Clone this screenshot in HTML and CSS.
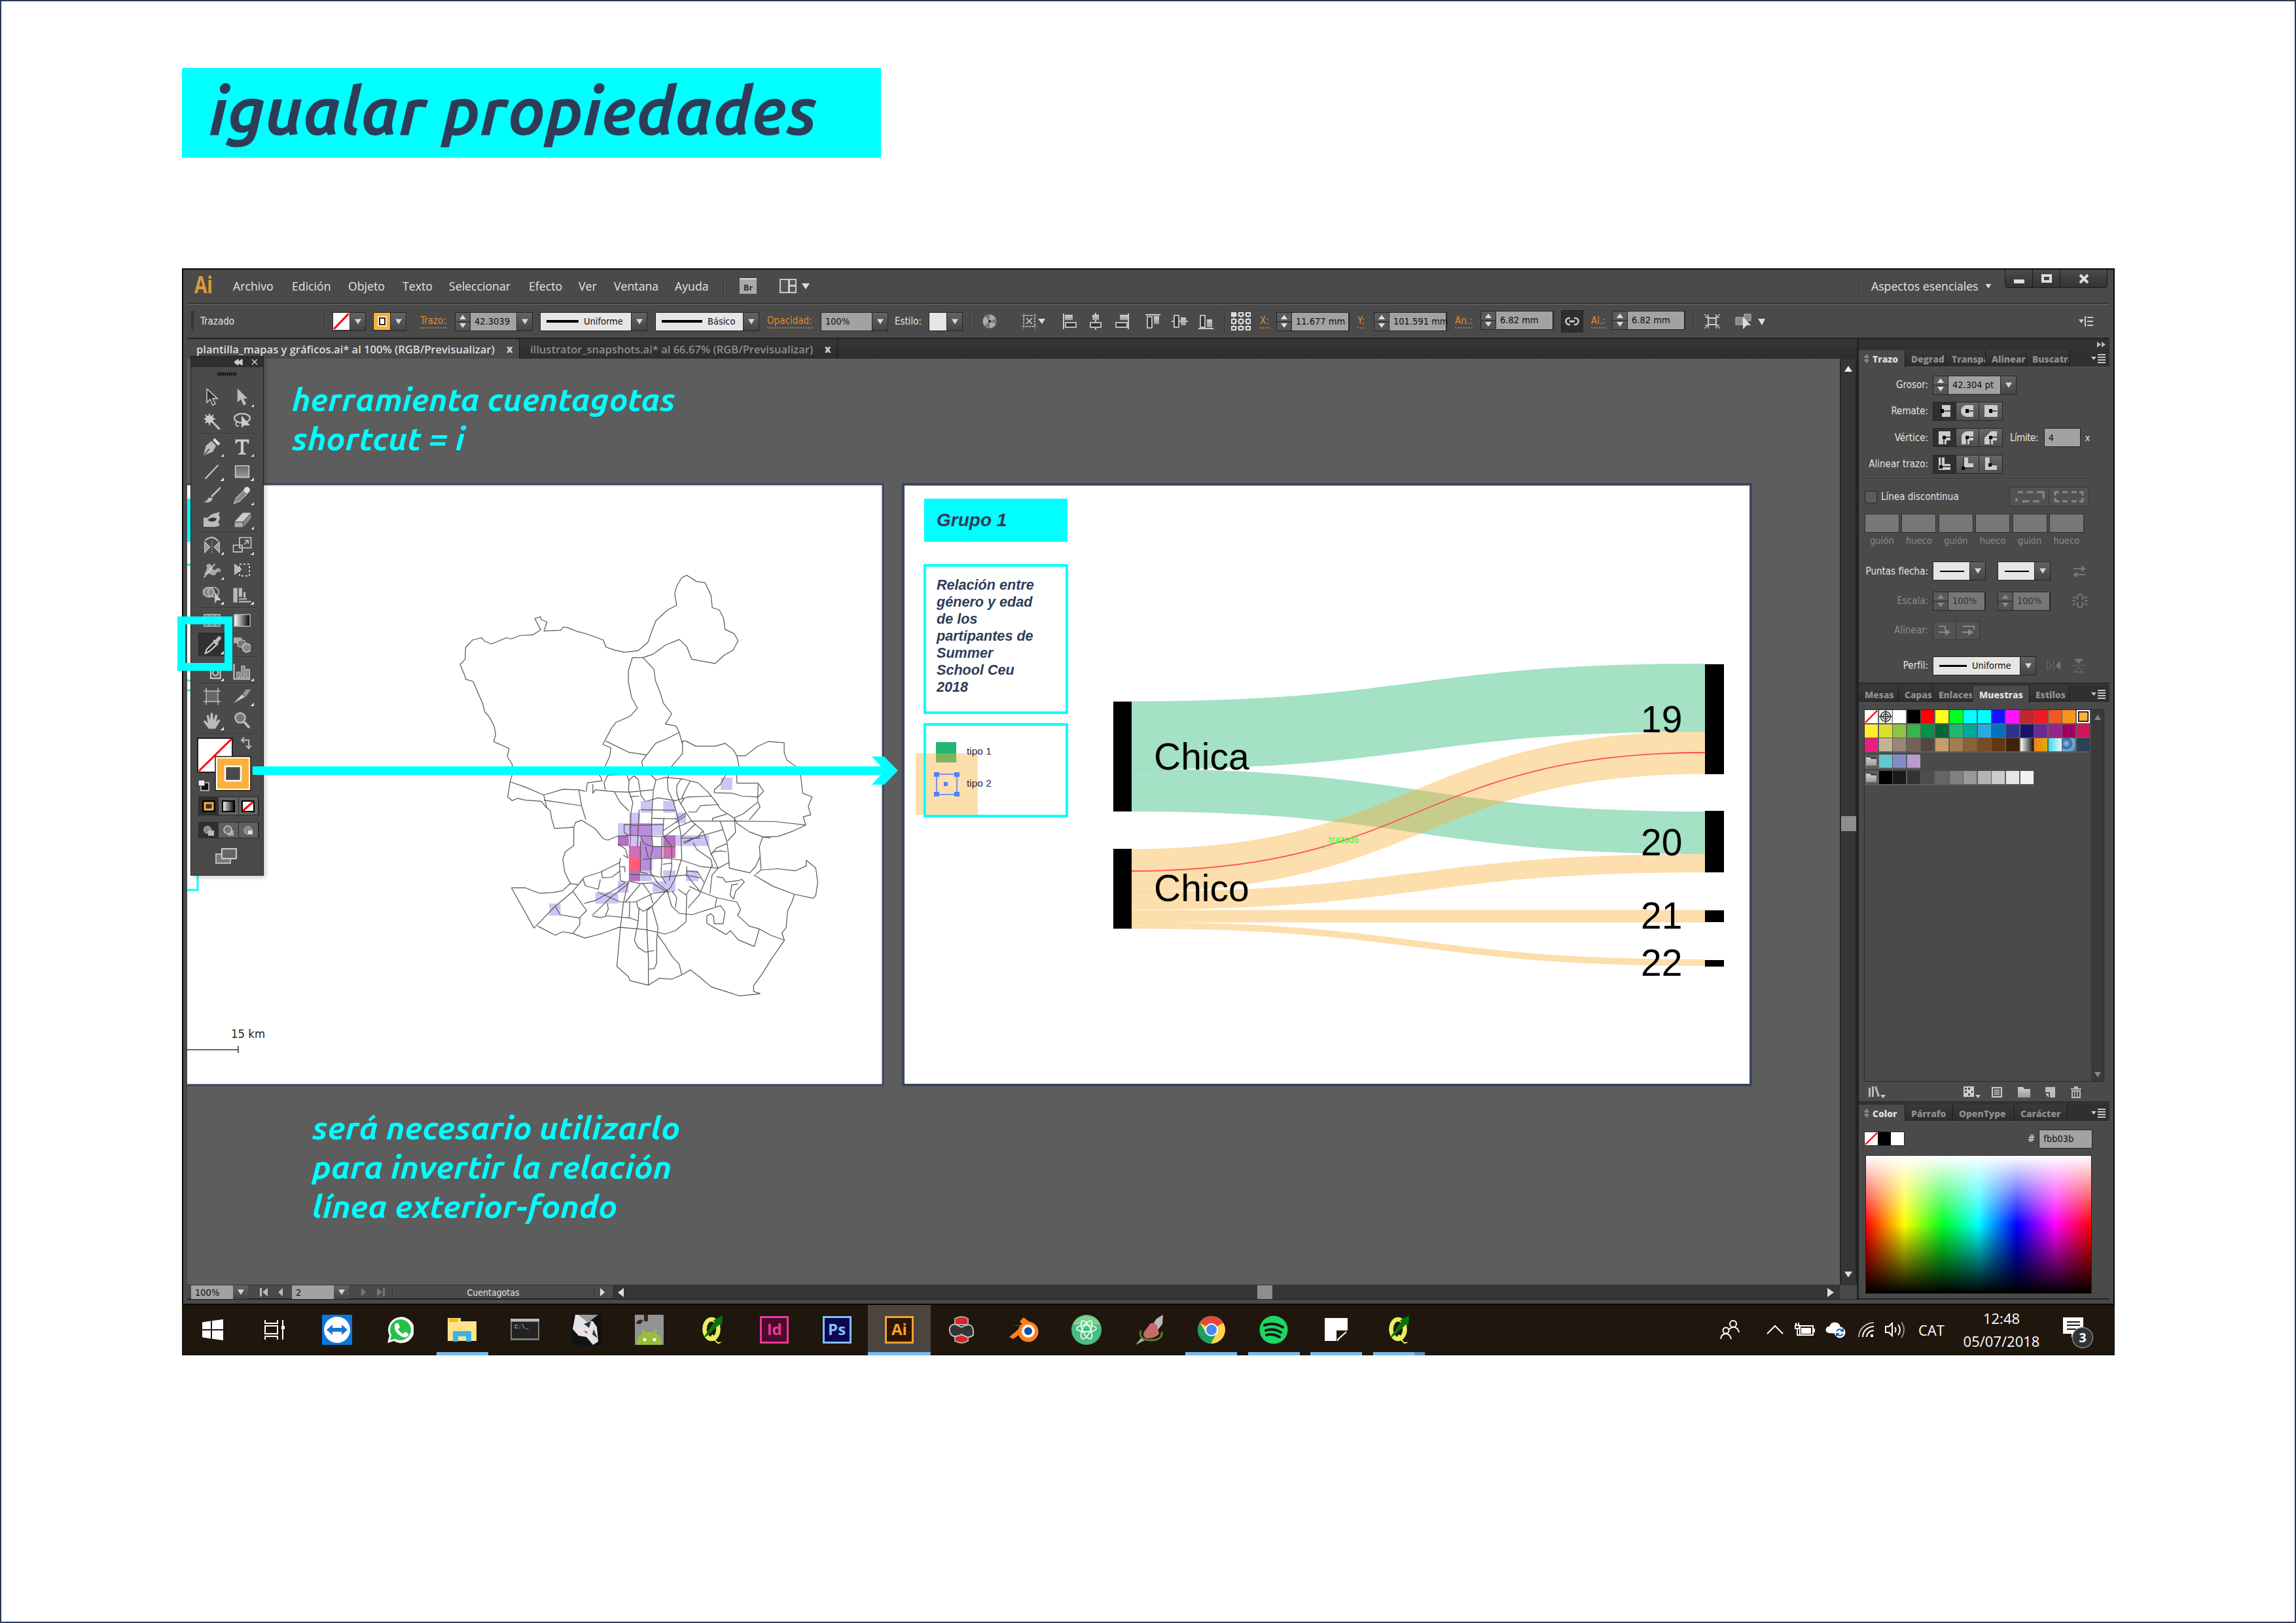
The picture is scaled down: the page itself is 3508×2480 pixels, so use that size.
FILE: index.html
```html
<!DOCTYPE html>
<html lang="es">
<head>
<meta charset="utf-8">
<title>igualar propiedades</title>
<link rel="stylesheet" href="styles.css">
</head>
<body>
<svg width="0" height="0" class="defs">
  <defs>
    <linearGradient id="bw"><stop offset="0" stop-color="#fff"/><stop offset="1" stop-color="#000"/></linearGradient>
    <linearGradient id="gr" x2="0" y2="1"><stop offset="0" stop-color="#d0d0d0"/><stop offset="1" stop-color="#9a9a9a"/></linearGradient>
    <linearGradient id="bx" x2="0" y2="1"><stop offset="0" stop-color="#666"/><stop offset="1" stop-color="#999"/></linearGradient>
    <symbol id="menu-i" viewBox="0 0 22 14"><path d="M0 4h8L4 9zM10 0h12v2H10zM10 4h12v2H10zM10 8h12v2H10zM10 12h12v2H10z" fill="#c8c8c8"/></symbol>
    <symbol id="none" viewBox="0 0 20 20" preserveAspectRatio="none"><path d="M0 0h20v20H0z" fill="#fff"/><path d="M1 19 19 1" stroke="#f00" stroke-width="2.4"/></symbol>
    <symbol id="folder" viewBox="0 0 20 20"><path d="M2 4h6l2 3h8v10H2z" fill="url(#gr)"/><path d="M2 3h6l2 2h8" stroke="#222" fill="none"/></symbol>
    <symbol id="qgis" viewBox="0 0 36 46"><ellipse cx="17" cy="22" rx="10.500" ry="15" fill="none" stroke="#e8f060" stroke-width="6.500"/><path d="M18 30q5 2 6 8t9 3q-5 6-9 1t-8-9z" fill="#e8f060"/><path d="M4 36 22 10l-3-1L34 1l-1 16-4-2L17 26q-5 6-13 10z" fill="#087508"/></symbol>
    <symbol id="tri" viewBox="0 0 10 8"><path d="M0 0h10L5 8z" fill="#d8d8d8"/></symbol>
  </defs>
</svg>

<main class="page">
  <h1 class="title"><svg width="1068" height="137"><text x="41" y="102" textLength="930" lengthAdjust="spacingAndGlyphs">igualar propiedades</text></svg></h1>

  <section class="screen">
    <div class="app">
      <nav class="menubar">
        <span class="ai">Ai</span><span>Archivo</span><span>Edición</span><span>Objeto</span><span>Texto</span><span>Seleccionar</span><span>Efecto</span><span>Ver</span><span>Ventana</span><span>Ayuda</span>
        <i class="sep"></i>
        <span class="br">Br</span>
        <svg width="48" height="24"><path d="M1 1h26v22H1z" fill="#ccc"/><path d="M3 3h11v18H3zM17 3h8v7h-8zM17 13h8v8h-8z" fill="#555"/><path d="M35 8h12l-6 9z" fill="#ddd"/></svg>
        <i class="sep"></i>
        <span>Aspectos esenciales</span>
        <svg class="tri" width="10" height="7"><use href="#tri"/></svg>
        <div class="winbtns">
          <b><svg width="16" height="16"><path d="M0 9h16v6H0z" fill="#ddd"/></svg></b>
          <b><svg width="18" height="14"><path d="M3 2h12v9H3z" fill="none" stroke="#ddd" stroke-width="4"/></svg></b>
          <b><svg width="18" height="16"><path d="m3 2 12 12M15 2 3 14" stroke="#ddd" stroke-width="4"/></svg></b>
        </div>
      </nav>

      <div class="control">
        <i class="grip"></i>
        <span>Trazado</span>
        <i class="sep"></i>
        <div class="combo"><svg width="26" height="26"><use href="#none"/></svg><b class="dd"><svg><use href="#tri"/></svg></b></div>
        <div class="combo"><svg width="26" height="26"><path d="M0 0h26v26H0z" fill="#fbb03b"/><path d="M8.500 7.500h9v11h-9z" fill="#fff" stroke="#fff" stroke-width="4"/><path d="M9 8h8v10H9z" fill="#fff" stroke="#222" stroke-width="2"/></svg><b class="dd"><svg><use href="#tri"/></svg></b></div>
        <span class="link">Trazo:</span>
        <div class="combo"><b class="spin"></b><span class="val w71">42.3039</span><b class="dd"><svg><use href="#tri"/></svg></b></div>
        <div class="combo"><span class="val light w139"><i class="stroke"></i>Uniforme</span><b class="dd"><svg><use href="#tri"/></svg></b></div>
        <div class="combo"><span class="val light w134"><i class="stroke long"></i>Básico</span><b class="dd"><svg><use href="#tri"/></svg></b></div>
        <span class="link">Opacidad:</span>
        <div class="combo"><span class="val w78">100%</span><b class="dd"><svg><use href="#tri"/></svg></b></div>
        <span>Estilo:</span>
        <div class="combo"><span class="val light w26"></span><b class="dd"><svg><use href="#tri"/></svg></b></div>
        <i class="sep"></i>
        <svg width="22" height="24"><circle cx="11" cy="12" r="10.500" fill="#aaa"/><path d="M11 12 4 4l7-3zM11 12l10-4v8zM11 12l-8 7 8 4z" fill="#777"/><circle cx="11" cy="12" r="2" fill="#222"/></svg>
        <i class="sep"></i>
        <svg width="38" height="26"><path d="M4 4h17v17H4z" fill="none" stroke="#ccc" stroke-width="2" stroke-dasharray="3 2"/><path d="M0 4h25M0 21h25M4 0v26M21 0v26" stroke="#888"/><path d="m8 8 9 9m0-9-9 9" stroke="#ccc" stroke-width="1.500"/><path d="M26 9h11l-5 8z" fill="#ddd"/></svg>
        <svg width="22" height="26"><path d="M1 1v24" stroke="#ccc" stroke-width="2"/><path d="M3 3h12v8H3z" fill="url(#gr)"/><path d="M4 15h16v7H4z" fill="#333" stroke="#bbb" stroke-width="2"/></svg>
        <svg width="18" height="26"><path d="M9 0v26" stroke="#ccc" stroke-width="2"/><path d="M4 3h10v8H4z" fill="url(#gr)"/><path d="M1 15h16v7H1z" fill="#333" stroke="#bbb" stroke-width="2"/></svg>
        <svg width="22" height="26"><path d="M20 1v24" stroke="#ccc" stroke-width="2"/><path d="M7 3h12v8H7z" fill="url(#gr)"/><path d="M1 15h17v7H1z" fill="#333" stroke="#bbb" stroke-width="2"/></svg>
        <svg width="23" height="26"><path d="M0 3h23" stroke="#ccc" stroke-width="2"/><path d="M13 5h8v12h-8z" fill="url(#gr)"/><path d="M3 6h7v17H3z" fill="#333" stroke="#bbb" stroke-width="2"/></svg>
        <svg width="25" height="26"><path d="M0 13h25" stroke="#ccc" stroke-width="2"/><path d="M14 7h8v12h-8z" fill="url(#gr)"/><path d="M4 4h7v18H4z" fill="#333" stroke="#bbb" stroke-width="2"/></svg>
        <svg width="23" height="26"><path d="M0 24h23" stroke="#ccc" stroke-width="2"/><path d="M13 10h8v12h-8z" fill="url(#gr)"/><path d="M3 4h7v18H3z" fill="#333" stroke="#bbb" stroke-width="2"/></svg>
        <i class="sep"></i>
        <svg width="32" height="30"><path d="M5 5h22v20H5zM16 5v20M5 15h22" fill="none" stroke="#aaa" stroke-width="1.500"/><g fill="#4a4a4a" stroke="#ddd" stroke-width="2"><path d="M2 2h6v5H2z" fill="#ddd"/><path d="M13 2h6v5h-6zM24 2h6v5h-6zM2 12h6v6H2zM13 12h6v6h-6zM24 12h6v6h-6zM2 23h6v5H2zM13 23h6v5h-6zM24 23h6v5h-6z"/></g></svg>
        <span class="link">X:</span>
        <div class="combo"><b class="spin"></b><span class="val w87">11.677 mm</span></div>
        <span class="link">Y:</span>
        <div class="combo"><b class="spin"></b><span class="val w87">101.591 mm</span></div>
        <span class="link">An.:</span>
        <div class="combo up"><b class="spin"></b><span class="val w87">6.82 mm</span></div>
        <div class="chain"><svg width="22" height="14"><rect x="1.500" y="2" width="19" height="10" rx="5" fill="none" stroke="#ccc" stroke-width="2.500"/><path d="M8 0h6v14H8z" fill="#2e2e2e"/><path d="M7 7h8" stroke="#ccc" stroke-width="3"/></svg></div>
        <span class="link">Al.:</span>
        <div class="combo up"><b class="spin"></b><span class="val w87">6.82 mm</span></div>
        <i class="sep"></i>
        <svg width="24" height="24"><path d="m0 1 7 6m10 0 7-6M0 23l7-6m10 0 7 6M1 6h5V1m12 0v5h5M1 18h5v5m12 0v-5h5" fill="none" stroke="#bbb" stroke-width="1.500"/><path d="M6 7h12v10H6z" fill="#555" stroke="#ccc" stroke-width="2"/></svg>
        <svg width="48" height="24"><path d="M1 6h11v11H1z" fill="#888" stroke="#bbb"/><path d="M14 1h10v10H14z" fill="#888" stroke="#bbb"/><path d="m12 5 12 13h-6l-6 6z" fill="#ddd"/><path d="M35 8h11l-5 10z" fill="#ddd"/></svg>
        <svg width="23" height="16"><path d="M0 5h8L4 11z" fill="#ccc"/><path d="M10 0v16M13 2h9M13 8h9M13 14h9" stroke="#ccc" stroke-width="2"/></svg>
      </div>

      <div class="body">
        <div class="left">
          <div class="doctabs">
            <div class="on"><span>plantilla_mapas y gráficos.ai* al 100% (RGB/Previsualizar)</span><b>x</b></div>
            <div><span>illustrator_snapshots.ai* al 66.67% (RGB/Previsualizar)</span><b>x</b></div>
          </div>
          <div class="mid">
            <svg class="canvas" width="2525" height="1415" viewBox="286 548 2525 1415">
              <!-- map artboard -->
              <path d="M270 740H1349V1658H270z" fill="#fff" stroke="#3c4560" stroke-width="3"/>
              <path d="M286 762h10v66h-10z" fill="#0ff"/>
              <path d="M286 863h10M286 1040h10M286 1055h10M286 1360h16v-40" fill="none" stroke="#0ff" stroke-width="3"/>
              <path d="M286 1604h78M364 1598v11" stroke="#666" stroke-width="2"/>
              <text x="353" y="1586" class="km" textLength="52" lengthAdjust="spacingAndGlyphs">15 km</text>
              <svg x="680" y="860" width="600" height="680" viewBox="0 0 1568 1568" preserveAspectRatio="none">
                <g fill="#cfc3f6">
                  <path d="M1101 757h46v43h-46zM781 839h46v41h-46zM871 839h47v41h-47zM735 880h44v38h-44zM921 880h41v38h-41zM690 918h44v42h-44zM827 918h43v42h-43zM738 960h40v38h-40zM918 960h136v38H918zM690 1122h43v40h-43zM600 1161h91v40h-91zM416 1200h45v43h-45zM780 1084h46v38h-46zM871 1084h49v77h-91v-39h42zM962 1084h49v38h-49z"/>
                </g>
                <path d="M734 918h92v42h-92zM780 960h47v38h40v42h-40v44h-47z" fill="#bc8bdb"/>
                <path d="M690 960h44v38h-44zM871 960h49v38h-49zM734 1084h45v38h-45z" fill="#b56fc2"/>
                <path d="M734 998h45v42h-45zM871 998h49v42h-49z" fill="#cf6fb4"/>
                <path d="M734 1040h46v44h-46z" fill="#ff5c7c"/>
                <g class="map">
                  <path d="M770 310 716 315 680 308 642 297 632 272 570 252 528 242 488 228 472 226 462 238 395 240 407 208 384 200 382 190 358 196 382 236 350 254 300 256 265 268 245 264 185 286 158 276 145 264 110 272 82 298 80 340 60 358 80 400 82 410 112 418 135 465 150 495 158 524 178 545 196 576 202 605 194 630 256 654 248 682 268 710 270 740 260 770 255 800 250 825 268 838 290 830 320 836 384 840 404 862 420 872 425 900 437 936 514 932 514 996 480 1018 470 1045 478 1090 500 1130"/>
                  <path d="M770 310 810 280 826 240 842 204 888 166 925 150 917 110 925 82 945 52 965 44 1005 66 1038 70 1062 115 1067 158 1095 166 1112 195 1118 235 1155 250 1170 275 1150 308 1115 325 1078 355 985 340 965 295 935 270 880 290 830 322 790 334 748 334 732 380 732 420 745 475 768 512 740 540 683 562 665 582 630 640 662 652 658 680 640 716 615 745 628 768 568 775 564 806"/>
                  <path d="M790 334 834 375 840 415 858 455 872 495 905 532 880 568 922 575 935 598 948 640 948 628 962 628 1000 646 1080 646 1118 636 1150 658 1165 680 1174 720 1165 745 1165 776 1250 776 1272 805 1250 825 1185 822 1147 812 1075 810 1075 800 1100 780 1122 745"/>
                  <path d="M1165 680 1200 680 1245 648 1290 630 1354 634 1354 668 1365 695 1402 718 1420 750 1428 812 1466 825 1450 858 1460 888 1430 895 1440 924 1390 945 1330 964 1270 966 1215 948 1165 918 1155 900"/>
                  <path d="M948 640 948 672 900 722 888 765 890 800 912 842 930 900 942 960 945 1040 925 1100 900 1145 878 1160 826 1210M935 598 880 622 842 635 805 677 735 668 642 628M805 677 785 700 790 720 842 765 832 800 828 850 825 900 825 960 830 1000 820 1040 820 1090 850 1130 895 1162"/>
                  <path d="M260 772 320 790 394 818 470 798 536 800 560 806M394 818 406 862M394 836 545 856M534 800 545 856 562 905M514 932 520 915 545 907 598 936 632 972 650 977 690 962M590 780 590 812 600 800 675 806 735 808 830 800M675 806 700 845 734 874"/>
                  <path d="M650 748 635 775 640 800M650 748 725 746 735 770 732 800 750 845 742 880M735 765 755 750 772 765 778 800M780 802 782 820 800 840M842 765 880 756 950 762 1010 775 1050 808 1075 835 1100 868 1155 900 1160 950 1128 980M942 762 925 785 925 810 935 840 962 880 985 910 1030 945 1060 1020 1090 1076M978 770 960 800 945 830"/>
                  <path d="M805 840 850 828 920 838 970 825 1065 822M780 870 920 872M940 850 955 830M970 878 1002 878 1020 855 1092 852M1068 910 1068 900 1125 885M985 910 1155 910 1320 912 1440 924M1155 898 1190 885 1250 842 1258 860 1215 906M1250 780 1248 840"/>
                  <path d="M742 880 740 960 738 1000M775 870 770 960 768 1000M715 922 770 925 870 922M715 922 715 950 735 962M690 965 735 960 870 965M866 963 866 1035M873 902 870 960 905 1000 905 1070 895 1120M825 900 925 902 962 882M870 944 915 918 962 890M875 965 930 930 985 910M780 965 795 990 830 1000 920 1000M690 990 720 1008 730 1040 712 1030"/>
                  <path d="M945 965 1000 920M950 985 1010 965 1030 945M955 990 1000 968 1110 940M942 970 1020 970M1098 910 1110 940 1125 980 1132 1030 1135 1076 1217 1092 1240 1070 1258 1035 1255 1000 1268 966M990 985 1005 1010 1062 1045 1068 1070M1060 1030 1085 1004 1125 990M1066 1020 1100 1015 1125 1018M1268 966 1300 970M1258 1035 1262 1080"/>
                  <path d="M1232 1100 1310 1140 1395 1168 1470 1182 1480 1172 1488 1125 1480 1075 1442 1048 1442 1068 1400 1085 1330 1078 1262 1082 1240 1098"/>
                  <path d="M1395 1168 1385 1195 1368 1225 1362 1285 1345 1305 1355 1330 1300 1400 1265 1450 1232 1490 1232 1510 1258 1518 1175 1526 1120 1510 1062 1494 1020 1462 980 1434 945 1452 905 1467 855 1464 812 1488 738 1472 732 1458 686 1422 700 1285 712 1200 732 1120"/>
                  <path d="M1355 1330 1300 1312 1255 1290 1215 1280 1168 1242 1180 1222 1165 1195 1085 1180 1018 1158 975 1140M1045 1270 1122 1310 1140 1296 1170 1328 1235 1352 1255 1290M1045 1270 1045 1245 1060 1236 1072 1245 1075 1272 1110 1272 1118 1230 1100 1208 1078 1214 1085 1180M848 1310 880 1350 905 1385 935 1415 945 1452"/>
                  <path d="M265 1145 320 1145 375 1164 430 1162 470 1155 500 1130 532 1134 555 1108 620 1090 700 1055M265 1145 355 1287 440 1210 510 1158 550 1115M370 1280 440 1312 470 1300 510 1306 558 1322 620 1308 695 1284 800 1292 880 1308 920 1296 962 1265 965 1170M510 1306 538 1275 538 1250 565 1225 510 1158"/>
                  <path d="M440 1210 460 1240 538 1252M556 1200 600 1190 680 1150 722 1125M588 1242 620 1215 660 1180 735 1128M590 1245 620 1250 650 1244 740 1252 772 1262M610 1160 700 1195 760 1195 830 1165 885 1158M625 1085 628 1110 665 1108 700 1085M550 1112 560 1138 612 1150 620 1115M640 1244 652 1220 648 1200M738 1196 735 1250M765 1195 770 1215 792 1228 826 1210"/>
                  <path d="M700 1040 696 1062 700 1120 720 1125M700 1070 718 1072 718 1090M735 1098 820 1100 860 1108 960 1100 1020 1110M735 1122 780 1130 826 1128 885 1160M790 1130 818 1165 830 1200M720 1195 780 1132M790 1045 880 1040 945 1048 1020 1070 1090 1076 1135 1055M826 1210 806 1225 806 1290 812 1400 812 1488M826 1210 850 1285 845 1330 845 1410 835 1430 812 1432M775 1215 770 1270 756 1330 770 1355 800 1372 835 1366"/>
                  <path d="M885 1150 905 1210 935 1235 985 1240 1075 1215M905 1155 925 1180 920 1215M930 1150 962 1170 978 1150M965 1070 965 1100 990 1128 1018 1158M965 1085 1010 1090 1035 1128M1090 1076 1066 1100 1058 1165M1066 1065 1015 1170 970 1216M1085 1106 1110 1110 1120 1125 1170 1120 1185 1115 1195 1125 1160 1158 1152 1185 1138 1170 1145 1135 1170 1132M866 1035 862 1100 882 1130M870 1062 905 1058M738 824 775 822M800 1000 812 1040M780 980 780 1090 808 1095"/>
                </g>
              </svg>

              <!-- diagram artboard -->
              <path d="M1380 740H2675V1658H1380z" fill="#fff" stroke="#3c4560" stroke-width="4"/>
              <path d="M1412 762h219v66h-219z" fill="#0ff"/>
              <text x="1431" y="804" class="leg g">Grupo 1</text>
              <path d="M1413 864h217v225h-217z" fill="none" stroke="#0ff" stroke-width="4"/>
              <g class="leg">
                <text x="1431" y="901">Relación entre</text><text x="1431" y="927">género y edad</text><text x="1431" y="953">de los</text><text x="1431" y="979">partipantes de</text><text x="1431" y="1005">Summer</text><text x="1431" y="1031">School Ceu</text><text x="1431" y="1057">2018</text>
              </g>
              <path d="M1430 1134h31v31h-31z" fill="#22b573"/>
              <path d="M1399 1151h95v94h-95z" fill="#fbb03b" opacity=".42"/>
              <path d="M1413 1107h217v140h-217z" fill="none" stroke="#0ff" stroke-width="4"/>
              <path d="M1431 1183h31v31h-31z" fill="none" stroke="#4f80ff" stroke-width="1.500"/>
              <path d="M1427 1180h8v7h-8zM1458 1180h8v7h-8zM1427 1210h8v7h-8zM1458 1210h8v7h-8zM1442 1195h6v6h-6z" fill="#4f80ff"/>
              <text x="1477" y="1153" class="tipo">tipo 1</text><text x="1477" y="1202" class="tipo">tipo 2</text>
              <g fill="none" stroke="#22b573">
                <path d="M1729 1123.500C2167 1123.500 2167 1066 2605 1066" stroke-width="104" opacity=".41"/>
                <path d="M1729 1207.500C2167 1207.500 2167 1272.500 2605 1272.500" stroke-width="65" opacity=".41"/>
              </g>
              <g fill="none" stroke="#fbb03b">
                <path d="M1729 1330C2167 1330 2167 1150 2605 1150" stroke-width="65" opacity=".42"/>
                <path d="M1729 1376C2167 1376 2167 1319 2605 1319" stroke-width="28" opacity=".42"/>
                <path d="M1729 1400H2605" stroke-width="19" opacity=".42"/>
                <path d="M1729 1414C2167 1414 2167 1471 2605 1471" stroke-width="10" opacity=".42"/>
              </g>
              <path d="M1729 1331C2167 1331 2167 1150 2605 1150" stroke="#ff4f4f" stroke-width="1.800" fill="none"/>
              <path d="M1701 1072h28v168h-28zM1701 1297h28v122h-28zM2605 1015h29v168h-29zM2605 1239h29v94h-29zM2605 1391h29v18h-29zM2605 1467h29v10h-29z"/>
              <g class="sk"><text x="1763" y="1176">Chica</text><text x="1763" y="1377">Chico</text><text x="2507" y="1119">19</text><text x="2507" y="1307">20</text><text x="2507" y="1419">21</text><text x="2507" y="1491">22</text></g>
              <text x="2030" y="1288" class="hint">trazado</text><path d="m2020 1291 7 7m0-7-7 7" stroke="#3f5"/>
            </svg>
            <div class="vscroll"><svg width="12" height="9"><path d="M0 9h12L6 0z" fill="#eee"/></svg><i></i><svg width="12" height="9"><path d="M0 0h12L6 9z" fill="#ddd"/></svg></div>
          </div>
          <div class="status">
            <span class="val">100%</span><b class="dd"><svg><use href="#tri"/></svg></b>
            <svg width="14" height="13"><path d="M1 0h3v13H1zM13 0v13L5 6.500z" fill="#bbb"/></svg>
            <svg width="14" height="13"><path d="M9 0v13L2 6.500z" fill="#bbb"/></svg>
            <span class="val">2</span><b class="dd"><svg><use href="#tri"/></svg></b>
            <svg width="14" height="13"><path d="M2 0v13l7-6.500z" fill="#777"/></svg>
            <svg width="14" height="13"><path d="M10 0h3v13h-3zM1 0v13l8-6.500z" fill="#777"/></svg>
            <span class="tool">Cuentagotas</span>
            <svg width="12" height="13"><path d="M4 0v13l7-6.500z" fill="#ddd"/></svg>
            <div class="hscroll"><svg width="10" height="14"><path d="M9 0v14L0 7z" fill="#ddd"/></svg><i></i><svg width="10" height="14"><path d="M0 0v14l10-7z" fill="#ddd"/></svg></div>
          </div>
        </div>

        <aside class="dock">
          <div class="dockhead"><svg width="14" height="9"><path d="M1 0v9l6-4.500zM8 0v9l6-4.500z" fill="#bbb"/></svg></div>
          <div class="ptabs t1"><b class="on"><svg width="8" height="14"><path d="M1 5 4 1l3 4zM1 9l3 4 3-4z" fill="none" stroke="#ccc"/></svg>Trazo</b><b>Degrad</b><b>Transpa</b><b>Alinear</b><b>Buscatra</b><em><svg width="22" height="14"><use href="#menu-i"/></svg></em></div>
          <div class="stroke-panel">
            <div class="row r40"><label>Grosor:</label><div class="combo"><b class="spin"></b><span class="val w80">42.304 pt</span><b class="dd"><svg><use href="#tri"/></svg></b></div></div>
            <div class="row r40"><label>Remate:</label>
              <div class="btns"><b class="on"><svg width="20" height="18"><path d="M6 0h13v18H6z" fill="#ccc"/><path d="M5 9h14M4 4v3" stroke="#222" stroke-width="1.500" fill="none"/><path d="M4 6h5v6H4z"/></svg></b><b><svg width="20" height="18"><path d="M19 0v18H9a9 9 0 0 1 0-18z" fill="#ccc"/><path d="M9 9h10" stroke="#222" stroke-width="1.500"/><path d="M7 6h5v6H7z"/></svg></b><b><svg width="20" height="18"><path d="M0 0h20v18H0z" fill="#ccc"/><path d="M9 9h10" stroke="#222" stroke-width="1.500"/><path d="M7 6h5v6H7z"/></svg></b></div></div>
            <div class="row r40"><label>Vértice:</label>
              <div class="btns"><b class="on"><svg width="20" height="20"><path d="M1 0h18v14h-6v6H1z" fill="#ccc"/><path d="M19 9H9v11" stroke="#222" stroke-width="1.500" fill="none"/><path d="M7 7h5v5H7z"/></svg></b><b><svg width="20" height="20"><path d="M19 0v14h-6v6H1V9a9 9 0 0 1 9-9z" fill="#ccc"/><path d="M19 9H9v11" stroke="#222" stroke-width="1.500" fill="none"/><path d="M7 7h5v5H7z"/></svg></b><b><svg width="20" height="20"><path d="M19 0v14h-6v6H0V10L10 0z" fill="#ccc"/><path d="M19 9H9v11" stroke="#222" stroke-width="1.500" fill="none"/><path d="M7 7h5v5H7z"/></svg></b></div>
              <span class="lim">Límite:</span><span class="val box">4</span><span class="x">x</span></div>
            <div class="row r40"><label>Alinear trazo:</label>
              <div class="btns"><b class="on"><svg width="20" height="20"><path d="M1 0h9v10h9v9H1z" fill="#ccc"/><path d="M5 0v14h14" stroke="#222" stroke-width="1.500" fill="none"/><path d="M2 12h5v5H2z"/></svg></b><b><svg width="20" height="20"><path d="M4 0h7v9h8v7H4z" fill="#ccc"/><path d="M4 0v16h15" stroke="#222" stroke-width="1.500" fill="none"/><path d="M1 14h5v5H1z"/></svg></b><b><svg width="20" height="20"><path d="M1 0h9v10h9v9H1z" fill="#ccc"/><path d="M9 0v11h10" stroke="#222" stroke-width="1.500" fill="none"/><path d="M6 9h5v5H6z"/></svg></b></div></div>
            <hr>
            <div class="row dash"><i class="check"></i><span>Línea discontinua</span>
              <div class="btns wide off"><b><svg width="46" height="18"><path d="M3 16v-5M5 2h8m6 0h9m6 0h10v10M12 16h10m6 0h10" stroke="#888" stroke-width="3" fill="none"/></svg></b><b><svg width="46" height="18"><path d="M2 7V2h6m5 0h8m6 0h8m4 0h5v5M2 11v5h6m5 0h8m6 0h8m4 0h5v-5" stroke="#888" stroke-width="3" fill="none"/></svg></b></div></div>
            <div class="dashes"><div><i></i>guión</div><div><i></i>hueco</div><div><i></i>guión</div><div><i></i>hueco</div><div><i></i>guión</div><div><i></i>hueco</div></div>
            <hr>
            <div class="row r51"><label>Puntas flecha:</label>
              <div class="combo"><span class="val light w55"><i class="thin"></i></span><b class="dd"><svg><use href="#tri"/></svg></b></div>
              <div class="combo second"><span class="val light w55"><i class="thin"></i></span><b class="dd"><svg><use href="#tri"/></svg></b></div>
              <svg class="ico" width="22" height="20"><path d="M2 5h12V1l7 5-7 5V7H2zM20 14H8v-3l-7 4 7 5v-4h12z" fill="#777"/></svg></div>
            <div class="row r40s dim"><label>Escala:</label>
              <div class="combo"><b class="spin"></b><span class="val w55">100%</span></div>
              <div class="combo second"><b class="spin"></b><span class="val w55">100%</span></div>
              <svg class="ico" width="24" height="24"><path d="M8 10V6q0-4 4-4t4 4v4M8 14v4q0 4 4 4t4-4v-4M0 12h5m14 0h5M1 6l4 2M1 18l4-2M23 6l-4 2m4 10-4-2" stroke="#777" stroke-width="2" fill="none"/></svg></div>
            <div class="row r50 dim"><label>Alinear:</label>
              <div class="btns off"><b><svg width="20" height="18"><path d="M1 3h10v5M1 12h12" stroke="#888" fill="none" stroke-width="2"/><path d="m11 7 8 5-8 5z" fill="#888"/></svg></b><b><svg width="20" height="18"><path d="M1 3h18v5M1 12h12" stroke="#888" fill="none" stroke-width="2"/><path d="m10 7 8 5-8 5z" fill="#888"/></svg></b></div></div>
            <hr>
            <div class="row r50"><label>Perfil:</label><div class="combo"><span class="val light w132"><i class="stroke pf"></i>Uniforme</span><b class="dd"><svg><use href="#tri"/></svg></b></div>
              <svg class="flip" width="22" height="16"><path d="M1 1v14l7-7z" fill="none" stroke="#777"/><path d="M11 0v16" stroke="#888" stroke-dasharray="2 2"/><path d="M21 1v14l-7-7z" fill="#777"/></svg>
              <svg class="flip2" width="18" height="22"><path d="M2 1h14L9 8z" fill="#777"/><path d="M0 11h18" stroke="#888" stroke-dasharray="2 2"/><path d="M2 21h14l-7-7z" fill="none" stroke="#777"/></svg></div>
          </div>

          <div class="ptabs t2"><b>Mesas</b><b>Capas</b><b>Enlaces</b><b class="on">Muestras</b><b>Estilos</b><em><svg width="22" height="14"><use href="#menu-i"/></svg></em></div>
          <div class="sw-panel">
            <div class="sw-box">
              <div class="sw-list">
                <div class="sw"><svg width="20" height="20"><use href="#none"/></svg><svg width="20" height="20"><path d="M0 0h20v20H0z" fill="#eee"/><circle cx="10" cy="10" r="7.500" fill="none" stroke="#333" stroke-width="1.500"/><circle cx="10" cy="10" r="4" fill="none" stroke="#333" stroke-width="1.500"/><path d="M10 0v20M0 10h20" stroke="#333" stroke-width="1.500"/></svg><i style="background:#fff"></i><i style="background:#000"></i><i style="background:#f00"></i><i style="background:#ffff1d"></i><i style="background:#00ff26"></i><i style="background:#0ff"></i><i style="background:#0ff"></i><i style="background:#1414ff"></i><i style="background:#ff14ff"></i><i style="background:#c1272d"></i><i style="background:#ed1c24"></i><i style="background:#f15a24"></i><i style="background:#f7931e"></i><i class="cur" style="background:#fbb03b"></i></div>
                <div class="sw"><i style="background:#fcee2f"></i><i style="background:#d9e02d"></i><i style="background:#8cc63f"></i><i style="background:#39b54a"></i><i style="background:#009245"></i><i style="background:#006837"></i><i style="background:#22b573"></i><i style="background:#00a99d"></i><i style="background:#29abe2"></i><i style="background:#0071bc"></i><i style="background:#2e3192"></i><i style="background:#1b1464"></i><i style="background:#662d91"></i><i style="background:#93278f"></i><i style="background:#9e005d"></i><i style="background:#d4145a"></i></div>
                <div class="sw"><i style="background:#ed1e79"></i><i style="background:#c7b299"></i><i style="background:#998675"></i><i style="background:#736357"></i><i style="background:#534741"></i><i style="background:#c69c6d"></i><i style="background:#a67c52"></i><i style="background:#8c6239"></i><i style="background:#754c24"></i><i style="background:#603813"></i><i style="background:#42210b"></i><i style="background:linear-gradient(90deg,#fff,#111)"></i><i style="background:linear-gradient(90deg,#ff7a10,#d8b010)"></i><i style="background:linear-gradient(90deg,#3ddcee,#e8f4f4)"></i><i class="pat"></i><i style="background:#2e3f58"></i></div>
                <div class="sw group"><svg width="20" height="20"><use href="#folder"/></svg><i style="background:#63c8cd"></i><i style="background:#838bc5"></i><i style="background:#bb9bcb"></i></div>
                <div class="sw group"><svg width="20" height="20"><use href="#folder"/></svg><i style="background:#000"></i><i style="background:#1a1a1a"></i><i style="background:#333"></i><i style="background:#4d4d4d"></i><i style="background:#666"></i><i style="background:#808080"></i><i style="background:#999"></i><i style="background:#b3b3b3"></i><i style="background:#ccc"></i><i style="background:#e6e6e6"></i><i style="background:#f2f2f2"></i></div>
              </div>
              <div class="sw-scroll"><svg width="10" height="8"><path d="M0 8h10L5 0z" fill="#888"/></svg><svg width="10" height="8"><path d="M0 0h10L5 8z" fill="#888"/></svg></div>
            </div>
            <div class="sw-foot">
              <svg width="28" height="18"><path d="M1 2h3v14H1zM6 0h3v16H6zM10 1l3-1 5 15-3 1z" fill="#bbb"/><path d="M19 13h8l-4 5z" fill="#ccc"/></svg>
              <svg width="27" height="18"><path d="M0 0h16v16H0z" fill="#ccc"/><path d="M2 2h3v3H2zM7 2h3v3H7zM2 7h3v3H2zM7 11h3v3H7zM12 7h2v3h-2z" fill="#444"/><path d="M18 13h8l-4 5z" fill="#ccc"/></svg>
              <svg width="16" height="16"><path d="M0 0h16v16H0z" fill="#ccc"/><path d="M2 2h12v12H2z" fill="#555"/><path d="M4 5h8M4 8h8M4 11h8" stroke="#ccc" stroke-width="1.500"/></svg>
              <svg width="20" height="16"><path d="M0 0h8l2 3h9v13H0z" fill="url(#gr)"/></svg>
              <svg width="16" height="16"><path d="M0 0h15v16H7V8H0z" fill="#bbb"/><path d="M0 10h5v6z" fill="#ccc"/></svg>
              <svg width="18" height="18"><path d="M1 3h16v2H1zM6 0h6v3H6z" fill="#bbb"/><path d="M3 7h12v10H3z" fill="none" stroke="#bbb" stroke-width="2"/><path d="M7 7v10M11 7v10" stroke="#bbb" stroke-width="1.500"/></svg>
            </div>
          </div>

          <div class="ptabs t3"><b class="on"><svg width="8" height="14"><path d="M1 5 4 1l3 4zM1 9l3 4 3-4z" fill="none" stroke="#ccc"/></svg>Color</b><b>Párrafo</b><b>OpenType</b><b>Carácter</b><em><svg width="22" height="14"><use href="#menu-i"/></svg></em></div>
          <div class="color-panel">
            <div class="hex"><div class="mini"><svg width="20" height="20"><use href="#none"/></svg><i class="k"></i><i class="w"></i></div><span>#</span><span class="val">fbb03b</span></div>
            <div class="spectrum"></div>
          </div>
        </aside>
      </div>
    </div>

    <footer class="taskbar">
      <div class="apps">
        <div><svg width="32" height="32"><path d="M0 4.500 13 2.500V15H0zM15 2.200 32 0v15H15zM0 17h13v12.500L0 27.500zM15 17h17v15l-17-2.200z" fill="#fff"/></svg></div>
        <div><svg width="32" height="30"><path d="M1 0v5h19V0M1 30v-5h19v5M1 9h19v12H1zM28 0v30" fill="none" stroke="#fff" stroke-width="2"/><path d="M26 9h5v5h-5z" fill="#fff"/></svg></div>
        <div><svg width="46" height="46"><path d="M0 0h46v46H0z" fill="#0a78dc"/><circle cx="23" cy="23" r="20" fill="#fff"/><path d="m7 23 9-8v5h14v-5l9 8-9 8v-5H16v5z" fill="#1976d2"/></svg></div>
        <div><svg width="42" height="42"><path d="M2 41 5 30A20 20 0 1 1 12 38z" fill="#fff"/><path d="m6 37 2-8a16 16 0 1 1 6 6z" fill="#25c24a"/><path d="M14 12q3-3 5 0l2 5-3 3q3 5 8 7l3-3 5 3q1 3-3 5-5 2-12-4-9-8-5-16z" fill="#fff"/></svg></div>
        <div class="run"><svg width="44" height="36"><path d="M0 0h20v5h24v30H0z" fill="#ffe28c"/><path d="M2 1h14v5H2z" fill="#ffb900"/><path d="M8 36V20h28v16h-8v-8H16v8z" fill="#3bb3ea"/></svg></div>
        <div><svg width="44" height="34"><path d="M0 0h44v33H0z" fill="#777"/><path d="M2 5h40v25H2z" fill="#222"/><path d="M0 0h44v4H0z" fill="#bbb"/><text x="6" y="15" font-size="9" fill="#ccc" font-family="Liberation Mono">C:\_</text></svg></div>
        <div><svg width="46" height="46"><path d="M0 0h46v46H0z" fill="#111"/><path d="M5 0 1 22l9 10 12 2 10 12 8-5-2-22-6-9L20 8 10 0z" fill="#e4e4e4"/><path d="M10 0 24 12 40 0z" fill="#999"/><path d="m18 14 8 6 3-10zM33 22l6 14-8-6z" fill="#333"/><path d="m18 24 6 2-2 3z" fill="#e33"/></svg></div>
        <div><svg width="44" height="46"><path d="M0 0h44v46H0z" fill="#909296"/><path d="M17 0v10M5 14a4 4 0 0 1 6-3" stroke="#3a2418" stroke-width="6"/><path d="M3 46V42a19 16 0 0 1 38 0v4z" fill="#97bf3a"/><path d="m11 22 4 8m18-8-4 8" stroke="#97bf3a" stroke-width="3"/><circle cx="15" cy="38" r="2.500" fill="#fff"/><circle cx="30" cy="38" r="2.500" fill="#fff"/></svg></div>
        <div><svg width="36" height="46"><use href="#qgis"/></svg></div>
        <div><span class="cc id">Id</span></div>
        <div><span class="cc ps">Ps</span></div>
        <div class="active"><span class="cc il">Ai</span></div>
        <div><svg width="40" height="42"><path d="M10 4q10-6 20 0v9H10zM10 38q10 6 20 0v-9H10z" fill="#d22" stroke="#aaa" stroke-width="2"/><path d="M2 18q2-6 10-5l8 4q8-5 14-3 5 3 4 15-4 4-10 3l-8-4q-8 5-14 2-5-4-4-12z" fill="#333" stroke="#bbb" stroke-width="2"/></svg></div>
        <div><svg width="46" height="38"><path d="M4 12h17l-5-6 6-6 18 14z" fill="#ff7f1e"/><path d="m0 30 20-17 6 6L6 33z" fill="#ff7f1e"/><circle cx="29" cy="22" r="15.500" fill="#ff7f1e"/><circle cx="29" cy="21" r="10" fill="#fff"/><circle cx="29" cy="21" r="6" fill="#0a4f9c"/></svg></div>
        <div><svg width="46" height="46"><circle cx="23" cy="23" r="23" fill="#4cbb84"/><path d="M2 15a23 23 0 0 1 42 0z" fill="#a6dd98" opacity=".6"/><g fill="none" stroke="#e8fff0" stroke-width="1.800"><ellipse cx="23" cy="23" rx="6" ry="15" transform="rotate(25 23 23)"/><ellipse cx="23" cy="23" rx="6" ry="15" transform="rotate(-25 23 23)"/><ellipse cx="23" cy="21" rx="15" ry="5"/></g></svg></div>
        <div><svg width="46" height="46"><path d="m26 18 8-12 10-6-1 14-9 12z" fill="#bbb"/><path d="m2 46 8-10 8 2z" fill="#aaa"/><path d="M10 24q-4 14 14 15 20 0 18-13" fill="none" stroke="#5a8020" stroke-width="3"/><path d="m15 26 10-13q8-1 10 4l3 12q-6 8-20 7-6-4-3-10z" fill="#c96a6a"/></svg></div>
        <div class="run"><svg width="44" height="44"><circle cx="22" cy="22" r="21" fill="#fdd34c"/><path d="M22 22 4 11a21 21 0 0 1 36 0z" fill="#dd4b3e"/><path d="M4 11a21 21 0 0 0 17 32l9-17H13z" fill="#1da05d"/><path d="M22 12h19l-1-1-17-3z" fill="#dd4b3e"/><circle cx="22" cy="22" r="10" fill="#fff"/><circle cx="22" cy="22" r="8" fill="#4587f4"/></svg></div>
        <div class="run"><svg width="44" height="44"><circle cx="22" cy="22" r="21.500" fill="#1ed760"/><path d="M8 15q14-5 28 3M10 23q12-4 23 3M11 30q10-3 20 3" fill="none" stroke="#191a14" stroke-width="4" stroke-linecap="round"/></svg></div>
        <div class="run"><svg width="36" height="36"><path d="M0 0h35v19H18v16H0z" fill="#fff"/><path d="M20 35v-2l13-12" stroke="#fff" stroke-width="2"/></svg></div>
        <div class="run two"><svg width="36" height="46"><use href="#qgis"/></svg></div>
      </div>
      <div class="tray">
        <svg width="30" height="30"><g fill="none" stroke="#fff" stroke-width="2"><circle cx="20" cy="6" r="5"/><circle cx="9" cy="16" r="4.500"/><path d="M1 29q1-8 8-8 6 0 8 8M14 14q6-6 12-1 2 2 3 6"/></g></svg>
        <svg width="26" height="15"><path d="m1 14 12-12 12 12" fill="none" stroke="#fff" stroke-width="2"/></svg>
        <svg width="32" height="22"><path d="M8 5h20v14H8z" fill="none" stroke="#fff" stroke-width="2"/><path d="M10 8h15v9H10z" fill="#fff"/><path d="M2 0v4M6 0v4M1 4h6v5H1zM4 8v11h4M30 9v6" stroke="#fff" stroke-width="1.800" fill="none"/></svg>
        <svg width="32" height="26"><path d="M5 18q-6-2-4-7 2-4 5-3Q9 0 17 2q5 1 6 7v10z" fill="#fff"/><circle cx="22" cy="17" r="8.500" fill="#fff"/><path d="M17 15q5-6 10 0m0-4v4h-4M27 19q-5 6-10 0m0 4v-4h4" stroke="#1e63c8" stroke-width="2.200" fill="none"/></svg>
        <svg width="25" height="25"><g fill="none" stroke="#fff" stroke-width="2"><path d="M1 24A24 22 0 0 1 24 2" opacity=".7"/><path d="M7 24A17 16 0 0 1 24 8"/><path d="M13 24A11 10 0 0 1 24 14"/></g><path d="M19 20h4v4h-4z" fill="#fff"/></svg>
        <svg width="32" height="28"><g fill="none" stroke="#fff" stroke-width="2"><path d="M1 9h5l5-5v19l-5-5H1zM15 10q3 4 0 8M20 6q6 8 0 16"/><path d="M25 2q8 12 0 24" opacity=".5"/></g></svg>
        <span>CAT</span>
        <div class="clock">12:48<br>05/07/2018</div>
        <svg width="50" height="48"><path d="M0 0h31v25H19l-6 6v-6H0z" fill="#fff"/><path d="M6 7h20M6 12h20M6 18h14" stroke="#1f160e" stroke-width="2"/><circle cx="30" cy="31" r="15.500" fill="#333" stroke="#888" stroke-width="1.500"/><text x="30" y="38" text-anchor="middle" class="n3">3</text></svg>
      </div>
    </footer>
  </section>

  <!-- floating tools panel -->
  <div class="toolbox">
    <header><svg width="36" height="9"><path d="M6 0v9L0 4.500zM12 0v9L6 4.500zM27 0l8 8M35 0l-8 8" fill="#ccc" stroke="#ccc" stroke-width="1.500"/></svg></header>
    <i class="tgrip"></i>
    <div class="tg select">
      <svg class="t" viewBox="0 0 26 26"><path d="M5 0v21l5-5 4 9 4-2-4-8h7z" fill="#333" stroke="#ccc" stroke-width="1.500"/></svg>
      <svg class="t c" viewBox="0 0 26 26"><path d="M6 0v21l5-5 4 9 4-2-4-8h6z" fill="#bbb"/></svg>
      <svg class="t" viewBox="0 0 26 26"><path d="m12 10 14 14-3 2-13-14z" fill="#bbb"/><path d="m9 0 2 5 5-3-2 5 5 2-5 2 2 5-5-2-2 6-2-6-5 2 2-5-4-2 4-2-2-5 5 3z" fill="#ccc"/></svg>
      <svg class="t" viewBox="0 0 26 26"><ellipse cx="13" cy="8" rx="12" ry="7" fill="none" stroke="#bbb" stroke-width="2.500"/><path d="M5 13q-4 8 3 7" fill="none" stroke="#bbb" stroke-width="2"/><path d="M12 4v19l4-4h9z" fill="#ccc"/></svg>
    </div>
    <div class="tg draw">
      <svg class="t c" viewBox="0 0 26 26"><path d="M0 26 4 11l8-7 7 7-5 9z" fill="#bbb"/><path d="m14 3 3-3 8 8-3 3z" fill="#ddd"/><path d="m1 25 8-9" stroke="#444" stroke-width="1.500"/></svg>
      <svg class="t c" viewBox="0 0 26 26"><path d="M3 2h20v6h-2l-1-3h-5v16l4 2v1H7v-1l4-2V5H6L5 8H3z" fill="#ccc"/></svg>
      <svg class="t c" viewBox="0 0 26 26"><path d="M3 24 22 4" stroke="#ccc" stroke-width="2"/></svg>
      <svg class="t c" viewBox="0 0 26 26"><path d="M3 5h20v17H3z" fill="url(#bx)" stroke="#ccc" stroke-width="1.500"/></svg>
      <svg class="t" viewBox="0 0 26 26"><path d="M0 23q6-1 7-6 5-2 7 1-3 8-14 5z" fill="#bbb"/><path d="M12 15 26 1" stroke="#bbb" stroke-width="3"/></svg>
      <svg class="t c" viewBox="0 0 26 26"><path d="m1 25 3-8 12-12 5 5L9 22z" fill="#888" stroke="#ccc"/><circle cx="20" cy="5" r="4.500" fill="#ddd"/></svg>
      <svg class="t" viewBox="0 0 26 26"><path d="M0 10h7q4-6 12-7l6-2-2 5q4 4 0 9-1 4 2 6-3 3-8 3H0z" fill="#bbb"/><path d="M6 14q4-4 8-4 8 0 5 4-5 4-13 0z" fill="#333"/></svg>
      <svg class="t c" viewBox="0 0 26 26"><path d="M2 16 14 3h12L14 16z" fill="#ccc"/><path d="M2 17h12v7H2z" fill="#aaa"/><path d="M15 16 26 4v7L15 24z" fill="#888"/></svg>
    </div>
    <div class="tg shape">
      <svg class="t c" viewBox="0 0 26 26"><path d="M2 8v16l8-8zM24 8v16l-8-8z" fill="#999" stroke="#ccc"/><path d="M13 6v20" stroke="#ccc" stroke-dasharray="2 2"/><path d="M3 6q10-9 19 1" fill="none" stroke="#ccc" stroke-width="2"/></svg>
      <svg class="t c" viewBox="0 0 26 26"><path d="M9 2h17v15H9zM0 13h13v10H0z" fill="none" stroke="#ccc" stroke-width="1.500"/><path d="m16 12 6-6m-5 0h5v5" stroke="#ccc" fill="none" stroke-width="1.500"/></svg>
      <svg class="t c" viewBox="0 0 26 26"><path d="M1 20Q8 8 4 6q8-6 9 4 3 6 8 0 5 0 5 6-6-2-8 4-6 2-9-2z" fill="#aaa"/><path d="m1 24 16-20" stroke="#ddd" stroke-width="1.500"/></svg>
      <svg class="t" viewBox="0 0 26 26"><path d="M9 4h15v18H9z" fill="none" stroke="#ccc" stroke-width="2" stroke-dasharray="3 3"/><path d="M1 3v18l12-9z" fill="#bbb"/></svg>
      <svg class="t c" viewBox="0 0 26 26"><ellipse cx="8" cy="9" rx="8" ry="7" fill="#888" stroke="#ccc" stroke-width="1.500"/><ellipse cx="15" cy="9" rx="8" ry="7" fill="none" stroke="#bbb" stroke-width="1.500"/><path d="M17 9v17l3-5h6z" fill="#ccc"/></svg>
      <svg class="t c" viewBox="0 0 26 26"><path d="M0 3h6v21H0zM8 3h5v13H8zM15 9h3v8h-3zM8 18h12v2H8zM8 22h18v2H8z" fill="#bbb"/></svg>
    </div>
    <div class="tg paint">
      <svg class="t" viewBox="0 0 26 26"><path d="M1 4h24v18H1zM1 13q12-6 24 0M8 4q4 9 0 18M18 4q-4 9 0 18" fill="#777" stroke="#bbb" stroke-width="1.500"/></svg>
      <svg class="t" viewBox="0 0 26 26"><path d="M1 4h24v18H1z" fill="url(#bw)" stroke="#bbb" stroke-width="1.500"/></svg>
      <span class="sel"><svg class="t c" viewBox="0 0 26 26"><path d="m3 26 2-6L16 9l4 4L9 23z" fill="none" stroke="#ddd" stroke-width="1.800"/><path d="m14 6 4 0 4-5q5-1 4 4l-4 4v4l-3 2z" fill="#bbb"/></svg></span>
      <svg class="t" viewBox="0 0 26 26"><path d="M0 2h12v9H0z" fill="#aaa"/><rect x="6" y="6" width="12" height="11" rx="4" fill="#777" stroke="#ccc"/><circle cx="20" cy="18" r="6.500" fill="#888" stroke="#ccc" stroke-width="1.500"/></svg>
    </div>
    <div class="tg symbols">
      <svg class="t c" viewBox="0 0 26 26"><path d="M11 6h14v17H11z" fill="none" stroke="#ccc" stroke-width="2"/><circle cx="18" cy="15" r="4" fill="none" stroke="#ccc" stroke-width="2"/><path d="M13 2h8v4h-8z" fill="#aaa"/></svg>
      <svg class="t c" viewBox="0 0 26 26"><path d="M1 2v22h24" fill="none" stroke="#ccc" stroke-width="2"/><path d="M5 14h5v8H5zM12 5h5v17h-5zM19 10h5v12h-5z" fill="#888" stroke="#ccc"/></svg>
    </div>
    <div class="tg view">
      <svg class="t" viewBox="0 0 26 26"><path d="M4 5h18v16H4z" fill="#666"/><path d="M4 0v26M22 0v26M0 5h26M0 21h26" stroke="#bbb" stroke-width="1.500"/></svg>
      <svg class="t c" viewBox="0 0 26 26"><path d="m0 23 13-13 4 4z" fill="#ccc"/><path d="m14 9 5-6 7 0-8 11z" fill="#999"/></svg>
      <svg class="t c" viewBox="0 0 26 26"><path d="M8 25 0 14l3-1 4 4L5 5h3l2 8 1-11h3l1 11 3-9 3 1-2 10 4-4 2 2-7 12z" fill="#bbb"/></svg>
      <svg class="t" viewBox="0 0 26 26"><circle cx="10" cy="9" r="7.500" fill="#777" stroke="#bbb" stroke-width="2.500"/><path d="m16 15 8 9" stroke="#bbb" stroke-width="4"/></svg>
    </div>
    <svg class="fillstroke" width="92" height="90"><path d="M1 6h53v52H1z" fill="#fff" stroke="#222" stroke-width="2"/><path d="M3 56 53 7" stroke="#f00" stroke-width="3"/><path d="M28 34h54v52H28z" fill="#fbb03b" stroke="#222" stroke-width="1.500"/><path d="M30 36h50v48H30z" fill="none" stroke="#fff" stroke-width="2"/><path d="M43 49h24v22H43z" fill="#4a4a4a" stroke="#fff" stroke-width="2.500"/><path d="M69 9h10v12M72 5l-4 4 4 4M75 17l4 5 4-5" fill="none" stroke="#bbb" stroke-width="2"/><path d="M6 74h12v12H6z" fill="#111" stroke="#aaa" stroke-width="2"/><path d="M2 70h10v9H2z" fill="#eee" stroke="#222"/></svg>
    <div class="modes m1"><b class="on"><svg width="20" height="20"><path d="M1 2h18v16H1z" stroke="#000" stroke-width="2"/><path d="M4 5h12v10H4z" fill="#333" stroke="#fbb03b" stroke-width="3"/></svg></b><b><svg width="20" height="20"><path d="M1 2h18v16H1z" fill="url(#bw)" stroke="#000" stroke-width="2"/></svg></b><b><svg width="20" height="20"><path d="M1 2h18v16H1z" fill="#fff" stroke="#000" stroke-width="2"/><path d="M2 17 18 3" stroke="#f00" stroke-width="3"/></svg></b></div>
    <div class="modes m2"><b class="on"><svg width="18" height="16"><circle cx="7" cy="7" r="5.500" fill="#888" stroke="#bbb"/><path d="M8 8h9v8H8z" fill="#bbb"/></svg></b><b><svg width="18" height="16"><path d="M8 8h9v8H8z" fill="#aaa"/><circle cx="8" cy="7" r="6" fill="#777" stroke="#ccc" stroke-width="1.500"/></svg></b><b><svg width="18" height="16"><circle cx="9" cy="8" r="6" fill="#888" stroke="#bbb"/><path d="M9 8h7v6H9z" fill="#ddd"/></svg></b></div>
    <svg class="scr" width="34" height="26"><path d="M1 10h22v14H1z" fill="#777" stroke="#bbb" stroke-width="2"/><path d="M10 2h22v15H10z" fill="#666" stroke="#ccc" stroke-width="2"/></svg>
  </div>

  <svg class="notes" width="3508" height="2480">
    <path d="M277 948h72v71h-72z" fill="none" stroke="#0ff" stroke-width="12"/>
    <path d="M386 1171H1346L1332 1156H1351L1372 1177.500 1351 1199H1332L1346 1184H386z" fill="#0ff"/>
    <g class="ann">
      <text x="446" y="628" textLength="586" lengthAdjust="spacingAndGlyphs">herramienta cuentagotas</text>
      <text x="446" y="688" textLength="264" lengthAdjust="spacingAndGlyphs">shortcut = i</text>
      <text x="477" y="1741" textLength="562" lengthAdjust="spacingAndGlyphs">será necesario utilizarlo</text>
      <text x="477" y="1801" textLength="549" lengthAdjust="spacingAndGlyphs">para invertir la relación</text>
      <text x="477" y="1861" textLength="466" lengthAdjust="spacingAndGlyphs">línea exterior-fondo</text>
    </g>
  </svg>
</main>
</body>
</html>
```
FILE: styles.css
```css
* { box-sizing: border-box; }
body { margin: 0; background: #fff; }
svg { display: block; flex: none; }
i, em { font-style: normal; }
.defs { position: absolute; }
.page { position: relative; width: 3508px; height: 2480px; padding: 104px 0 0 278px; box-shadow: inset 0 0 0 2px #2c3a57; overflow: hidden; font: 15px "DejaVu Sans Condensed", "DejaVu Sans", sans-serif; color: #e4e4e4; }
.title { margin: 0; width: 1068px; height: 137px; background: #0ff; }
.title text, .ann text { font: italic bold 102px Ubuntu, "Noto Sans", sans-serif; fill: #2e3c58; }
.ann text { font-size: 49px; fill: #0ff; }
.notes { position: absolute; left: 0; top: 0; }
.screen { margin-top: 169px; width: 2953px; height: 1661px; }
.app { height: 1584px; background: #4a4a4a; border: 2px solid #080808; padding: 0 6px; display: flex; flex-direction: column; white-space: nowrap; }

.sep { width: 2px; height: 32px; background: #333; border-right: 1px solid #5c5c5c; }

.menubar { height: 52px; display: grid; align-items: center; justify-items: start; padding: 0 0 1px 11px; font: 17.7px "Open Sans", sans-serif;
  grid-template-columns: 59px 90px 86px 83px 71px 122px 76px 54px 93px 74px 25px 60px 1651px 18px 174px 30px 1fr; border-bottom: 1px solid #222; }
.menubar .ai { font: bold 35px/40px "Open Sans", sans-serif; color: #e0993a; transform: translateY(-2px) scaleX(.8); transform-origin: left; }
.br { width: 26px; height: 24px; background: #aaa; color: #333; font: bold 13px/24px "Open Sans", sans-serif; text-align: center; border-top: 2px solid #ddd; }
.winbtns { display: flex; align-self: start; height: 28px; width: 157px; border: 1px solid #1c1c1c; border-top: 0; border-radius: 0 0 5px 5px; background: linear-gradient(#4a4a4a, #333); }
.winbtns b { flex: 0 0 42px; display: grid; place-items: center; border-right: 1px solid #1c1c1c; }
.winbtns b:last-child { flex: 1; border: 0; }

.control { height: 52px; border-top: 2px solid #5c5c5c; display: grid; align-items: center; justify-items: start; padding-left: 6px;
  grid-template-columns: 14px 190px 12px 62px 72px 53px 130px 176px 171px 82px 113px 52px 63px 19px 39px 20px 64px 41px 39px 46px 40px 41px 40px 9px 45px 25px 124px 25px 124px 39px 123px 46px 32px 124px 17px 47px 525px auto; }
.grip { width: 4px; height: 30px; background: repeating-linear-gradient(#111 0 1.500px, #4a4a4a 1.500px 3px); }
.link { color: #e5872b; border-bottom: 2px dotted #c9772a; line-height: 19px; }
.combo { display: flex; height: 29px; border: 1px solid #262626; color: #111; }
.combo > svg, .combo > .val { border-right: 1px solid #262626; }
.up { margin-top: -4px; }
.dd { width: 23px; display: grid; place-items: center; background: linear-gradient(#636363, #454545); }
.dd svg { width: 10px; height: 9px; }
.spin { width: 23px; border-right: 1px solid #262626; display: grid; align-content: space-around; justify-items: center; background: linear-gradient(#5c5c5c 13px, #262626 13px 14px, #555 14px); }
.spin::before, .spin::after { content: ""; border: 5px solid transparent; border-top-width: 0; border-bottom: 7px solid #ddd; }
.spin::after { transform: scaleY(-1); }
.val { background: #a2a2a2; color: #111; display: flex; align-items: center; padding-left: 6px; font-size: 14.500px; }
.light { background: #e6e6e6; }
.w26 { width: 27px; } .w55 { width: 56px; } .w71 { width: 71px; } .w78 { width: 78px; } .w80 { width: 80px; } .w87 { width: 87px; } .w132 { width: 133px; } .w134 { width: 134px; } .w139 { width: 139px; }
.stroke { width: 49px; height: 4px; background: #000; margin: 0 8px 0 3px; }
.stroke.long { width: 62px; }
.stroke.pf { width: 42px; height: 3px; }
.thin { width: 37px; height: 2px; background: #000; margin-left: 4px; }
.chain { width: 34px; height: 34px; background: #2e2e2e; border: 1px solid #222; display: grid; place-items: center; }

.body { flex: none; height: 1470px; border-top: 2px solid #222; display: grid; grid-template-columns: 2551px 1fr; }
.left { background: #4a4a4a; }
.doctabs { height: 30px; background: linear-gradient(#363636, #2d2d2d); display: flex; font: 600 16.550px "Open Sans", sans-serif; color: #8d8d8d; }
.doctabs div { display: flex; align-items: center; justify-content: space-between; width: 486px; padding: 0 7px 0 16px; border-right: 1px solid #1c1c1c; }
.doctabs .on { width: 508px; background: #4a4a4a; color: #ddd; padding-left: 14px; }
.doctabs b { color: #ccc; width: 12px; font-size: 15px; }
.mid { display: flex; height: 1415px; }
.canvas { background: #5d5d5d; }
.vscroll { width: 26px; background: #363636; border: solid #262626; border-width: 0 2px; display: flex; flex-direction: column; align-items: center; justify-content: space-between; padding: 11px 0; }
.vscroll i { width: 23px; height: 23px; background: #8e8e8e; margin-top: 5px; }
.status { height: 23px; border-top: 1px solid #333; border-bottom: 2px solid #222; display: grid; align-items: center; padding-left: 6px;
  grid-template-columns: 64px 35px 31px 24px 64px 38px 25px 26px 309px 29px 1fr; font-size: 14px; }
.status > * { margin: auto; }
.status > svg { transform: translateX(-4px); }
.status .val { width: 64px; height: 21px; margin: 0; }
.status .dd { height: 21px; margin: 0; }
.status .tool { width: 309px; border: solid #333; border-width: 0 1px; text-align: center; line-height: 20px; }
.status .hscroll { width: 100%; height: 21px; background: #363636; display: flex; justify-content: space-between; align-items: center; padding: 0 9px 0 6px; border-left: 1px solid #222; border-right: 26px solid #4a4a4a; }
.hscroll i { width: 23px; height: 21px; background: #8e8e8e; margin-left: 119px; }

.dock { border-left: 3px solid #222; display: flex; flex-direction: column; }
.dockhead { height: 17px; background: #323232; display: flex; justify-content: flex-end; align-items: center; padding-right: 6px; flex: none; }
.ptabs { height: 26px; flex: none; display: grid; font: bold 13.800px/27px "Open Sans", sans-serif; color: #8e8e8e; background: #303030; border-bottom: 1px solid #555; }
.t1 { grid-template-columns: 71px 62px 61px 62px 66px 61px; }
.t2 { grid-template-columns: 61px 52px 61px 87px 61px 61px; }
.t3 { grid-template-columns: 71px 73px 94px 81px 64px; }
.ptabs b { overflow: hidden; padding-left: 9px; border-right: 1px solid #1c1c1c; background: linear-gradient(#3a3a3a, #2c2c2c); height: 25px; }
.ptabs .on { display: flex; align-items: center; gap: 5px; height: 26px; padding-left: 8px; background: #4a4a4a; color: #ddd; }
.t2 .on { padding-left: 10px; }
.ptabs em { display: flex; align-items: center; justify-content: flex-end; padding-right: 6px; }
.stroke-panel { height: 483px; flex: none; padding: 7px 0 0 8px; background: #4a4a4a; border-bottom: 1px solid #222; }
.row { display: flex; align-items: center; }
.row label { width: 98px; margin-right: 7px; text-align: right; font-size: 15px; }
.r40 { height: 40.300px; } .r51 { height: 51px; } .r40s { height: 40px; } .r50 { height: 50px; }
.btns { display: flex; height: 29px; border: 1px solid #262626; }
.btns b { width: 35px; display: grid; place-items: center; background: linear-gradient(#666, #505050); border-right: 1px solid #262626; }
.btns b:last-child { border: 0; }
.btns .on { background: #303030; }
.btns.off b { background: #525252; border-color: #3a3a3a; }
.btns.off { border-color: #383838; }
.wide { margin-left: auto; margin-right: 31px; height: 30px; }
.wide b { width: 60px; }
.lim { margin-left: 11px; letter-spacing: -.5px; }
.box { width: 56px; height: 29px; border: 1px solid #262626; margin-left: 9px; }
.x { margin-left: 7px; font-size: 14px; }
.stroke-panel hr { width: 346px; height: 2px; margin: 2px 0 0; border: 0; border-top: 1px solid #3a3a3a; border-bottom: 1px solid #555; }
.dash { height: 52px; gap: 6px; }
.check { width: 19px; height: 19px; border: 1px solid #262626; background: #5c5c5c; margin-left: 1px; }
.dashes { display: grid; grid-template-columns: repeat(6, 53px); gap: 3.400px; text-align: center; color: #8a8a8a; height: 58px; margin-left: 1px; font-size: 14.500px; line-height: 25px; }
.dashes i { display: block; height: 29px; background: #777; border: 1px solid #303030; }
.second { margin-left: 18px; }
.stroke-panel .ico { margin-left: 33px; }
.dim { color: #8a8a8a; }
.dim .val { background: #777; color: #333; }
.dim .spin::before, .dim .spin::after { border-bottom-color: #888; }
.flip { margin-left: 16px; } .flip2 { margin-left: 18px; }

.t2, .t3 { margin-top: 4px; box-shadow: 0 -4px #333; }
.sw-panel { height: 610px; flex: none; padding: 10px 8px 0; background: #4a4a4a; border-bottom: 1px solid #222; }
.sw-box { height: 569px; display: flex; border: 1px solid #2b2b2b; }
.sw-list { width: 346px; }
.sw { display: flex; gap: 1.600px; background: #5e5e5e; width: max-content; height: 21.500px; }
.sw > * { width: 20px; height: 20px; }
.sw.group { margin-top: 3.500px; }
.cur { border: 2px solid #fff; box-shadow: inset 0 0 0 1.500px #000; }
.pat { background: radial-gradient(circle at 30% 40%, #9cc4e0, #2c6ba5 40%, #7fb0d4 60%, #2460a0); }
.sw-scroll { flex: 1; background: #3a3a3a; display: flex; flex-direction: column; justify-content: space-between; align-items: center; padding: 7px 0 6px; }
.sw-foot { display: grid; grid-template-columns: 146px 43px 40px 42px 38px 20px; padding-left: 6px; height: 32px; align-items: center; }
.color-panel { flex: 1; background: #4a4a4a; padding: 11px 0 0 8px; border-bottom: 2px solid #222; }
.hex { display: flex; align-items: center; height: 30px; }
.mini { display: flex; border: 1px solid #262626; }
.mini i { width: 20px; height: 20px; } .k { background: #000; } .w { background: #fff; }
.hex > span { margin-left: 188px; }
.hex > .val { margin-left: 6px; width: 82px; height: 29px; border: 1px solid #262626; }
.spectrum { margin: 10px 0 0 2px; width: 346px; height: 212px; border: 1px solid #222;
  background: linear-gradient(#fff 0, rgba(255,255,255,0) 50%, rgba(0,0,0,0) 50%, #000 100%), linear-gradient(90deg, #f00, #ff0 17%, #0f2 34%, #0ff 50%, #00f 67%, #f0f 84%, #f00); }

.taskbar { height: 77px; background: #1f160e; display: flex; justify-content: space-between; font: 22px "Open Sans", sans-serif; color: #fff; }
.apps { display: grid; grid-template-columns: repeat(20, 95.400px); margin-left: -1px; }
.apps > div { display: grid; place-items: center; padding-bottom: 2px; }
.apps .active { background: linear-gradient(#76b9ed, #76b9ed) bottom/100% 5px no-repeat #4b443f; }
.apps .run { background: linear-gradient(#76b9ed, #76b9ed) bottom/79px 5px no-repeat; }
.apps .two { background: linear-gradient(90deg, #76b9ed 63px, #5b90ba 63px) bottom/79px 5px no-repeat; }
.cc { width: 44px; height: 42px; border: 3px solid; font: bold 24px/34px "Open Sans", sans-serif; text-align: center; }
.id { color: #e8399a; background: #4b0a2b; } .ps { color: #7ec2f5; background: #0c0750; } .il { color: #f7a12e; background: #2b1603; }
.tray { width: 603px; display: grid; align-items: center; grid-template-columns: 71px 43px 47px 50px 41px 48px 64px 132px 1fr; border-right: 8px solid #1f160e; padding-bottom: 2px; }
.tray > span { padding-left: 3px; }
.clock { text-align: center; line-height: 35px; font-size: 22px; }
.tray > svg:last-child { margin: 10px 0 0 28px; }
.n3 { font: bold 20px "Open Sans", sans-serif; fill: #fff; }

.toolbox { position: absolute; left: 291px; top: 544px; width: 112px; height: 794px; background: #4a4a4a; border: 1px solid #222; padding: 0 9px; display: flex; flex-direction: column; box-shadow: 3px 3px 6px rgba(0,0,0,.2); }
.toolbox header { height: 16px; margin: 0 -9px; background: #2e2e2e; display: flex; justify-content: flex-end; align-items: center; padding-right: 8px; }
.tgrip { width: 30px; height: 5px; margin: 8px auto 14px; background: repeating-linear-gradient(90deg, #111 0 2px, #4a4a4a 2px 3px); }
.tg { display: grid; grid-template-columns: 46px 46px; grid-auto-rows: 37px; place-items: center; border-bottom: 1px solid #363636; box-shadow: 0 1px #555; flex: none; }
.select { height: 75px; } .draw { height: 151px; padding-top: 1px; } .shape { height: 115px; grid-auto-rows: 38px; } .paint { height: 75px; } .symbols { height: 41px; padding-top: 3px; } .view { height: 77px; }
.t { width: 26px; height: 26px; }
.c { background: linear-gradient(135deg, transparent 50%, #ddd 50%) right bottom/5px 5px no-repeat; width: 36px; height: 30px; }
.c > * { transform: scale(.9); transform-origin: 13px 13px; }
.sel { width: 42px; height: 35px; background: #303030; border: 1px solid #282828; display: grid; place-items: center; }
.fillstroke { flex: none; }
.modes { display: flex; margin: 5px 0 0 2px; border: 1px solid #2b2b2b; width: 93px; height: 29px; flex: none; }
.modes b { flex: 1; display: grid; place-items: center; background: #606060; border-right: 1px solid #2b2b2b; }
.modes .on { background: #303030; }
.m2 { height: 25px; margin-top: 10px; }
.scr { margin: 14px 0 0 28px; }

.map path { fill: none; stroke: #555; stroke-width: 1.200px; vector-effect: non-scaling-stroke; stroke-linejoin: round; }
.km { font: 18px "DejaVu Sans Condensed", sans-serif; fill: #222; }
.leg { font: italic bold 21.600px "Liberation Sans", Arial, sans-serif; fill: #2e3c58; }
.leg.g { font-size: 28px; }
.tipo { font: 15.500px "Liberation Sans", Arial, sans-serif; fill: #222c44; }
.sk { font: 57px "Liberation Sans", Arial, sans-serif; }
.hint { font: 13.500px "DejaVu Sans Condensed", sans-serif; fill: #2f3; }
```
